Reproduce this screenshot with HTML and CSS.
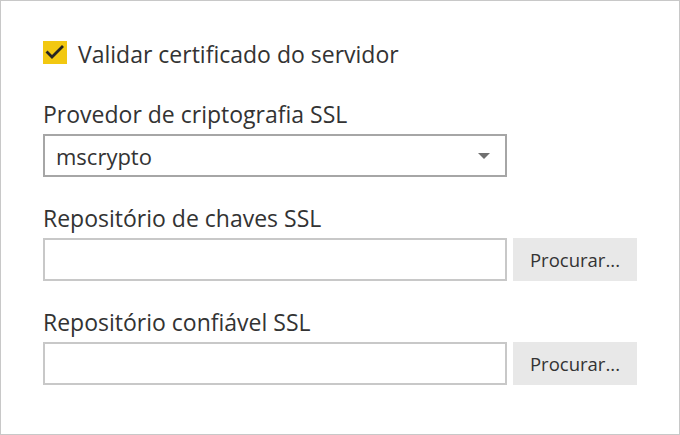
FILE: index.html
```html
<!DOCTYPE html>
<html lang="pt">
<head>
<meta charset="utf-8">
<title>SSL</title>
<link rel="stylesheet" href="styles.css">
</head>
<body>
<div class="dialog">
  <label class="check-row">
    <span class="checkbox">
      <svg width="24" height="23" viewBox="0 0 24 23" aria-hidden="true">
        <path d="M4.5 11.5 L9 16 L19 6" fill="none" stroke="#252423" stroke-width="2.8" stroke-linecap="square" stroke-linejoin="miter"/>
      </svg>
    </span>
    <span class="check-label">Validar certificado do servidor</span>
  </label>

  <div class="field">
    <div class="field-label">Provedor de criptografia SSL</div>
    <div class="select">
      <span class="select-value">mscrypto</span>
      <svg class="caret" width="12" height="6" viewBox="0 0 12 6" aria-hidden="true"><path d="M0 0 H12 L6 6 Z" fill="#707070"/></svg>
    </div>
  </div>

  <div class="field">
    <div class="field-label">Repositório de chaves SSL</div>
    <div class="input-row">
      <div class="input"></div>
      <div class="button">Procurar...</div>
    </div>
  </div>

  <div class="field">
    <div class="field-label">Repositório confiável SSL</div>
    <div class="input-row">
      <div class="input"></div>
      <div class="button">Procurar...</div>
    </div>
  </div>
</div>
</body>
</html>
```
FILE: styles.css
```css
html, body {
  margin: 0;
  padding: 0;
  background: #ffffff;
}
.dialog {
  box-sizing: border-box;
  width: 680px;
  height: 435px;
  border: 1px solid #c8c8c8;
  padding: 39px 0 0 42px;
  font-family: "Open Sans", "Noto Sans", sans-serif;
  color: #333333;
  font-size: 23px;
}
.check-row {
  display: flex;
  align-items: flex-start;
  gap: 11px;
  height: 25px;
}
.checkbox {
  width: 24px;
  height: 23px;
  margin-top: 1px;
  background: #f2c811;
  display: flex;
}
.check-label {
  line-height: 24px;
  margin-top: 2px;
}
.field {
  margin-top: 39px;
  width: 595px;
}
.field + .field {
  margin-top: 31px;
}
.field-label {
  height: 30px;
  line-height: 20px;
}
.select {
  box-sizing: border-box;
  width: 464px;
  height: 43px;
  border: 2px solid #a6a6a6;
  display: flex;
  align-items: center;
  justify-content: space-between;
  padding: 0 15px 0 11px;
  font-size: 22px;
}
.input-row {
  display: flex;
  gap: 6px;
}
.input {
  box-sizing: border-box;
  width: 464px;
  height: 43px;
  border: 2px solid #c8c8c8;
}
.button {
  width: 124px;
  height: 43px;
  background: #e8e8e8;
  display: flex;
  align-items: center;
  justify-content: center;
  font-size: 18.5px;
}
```
